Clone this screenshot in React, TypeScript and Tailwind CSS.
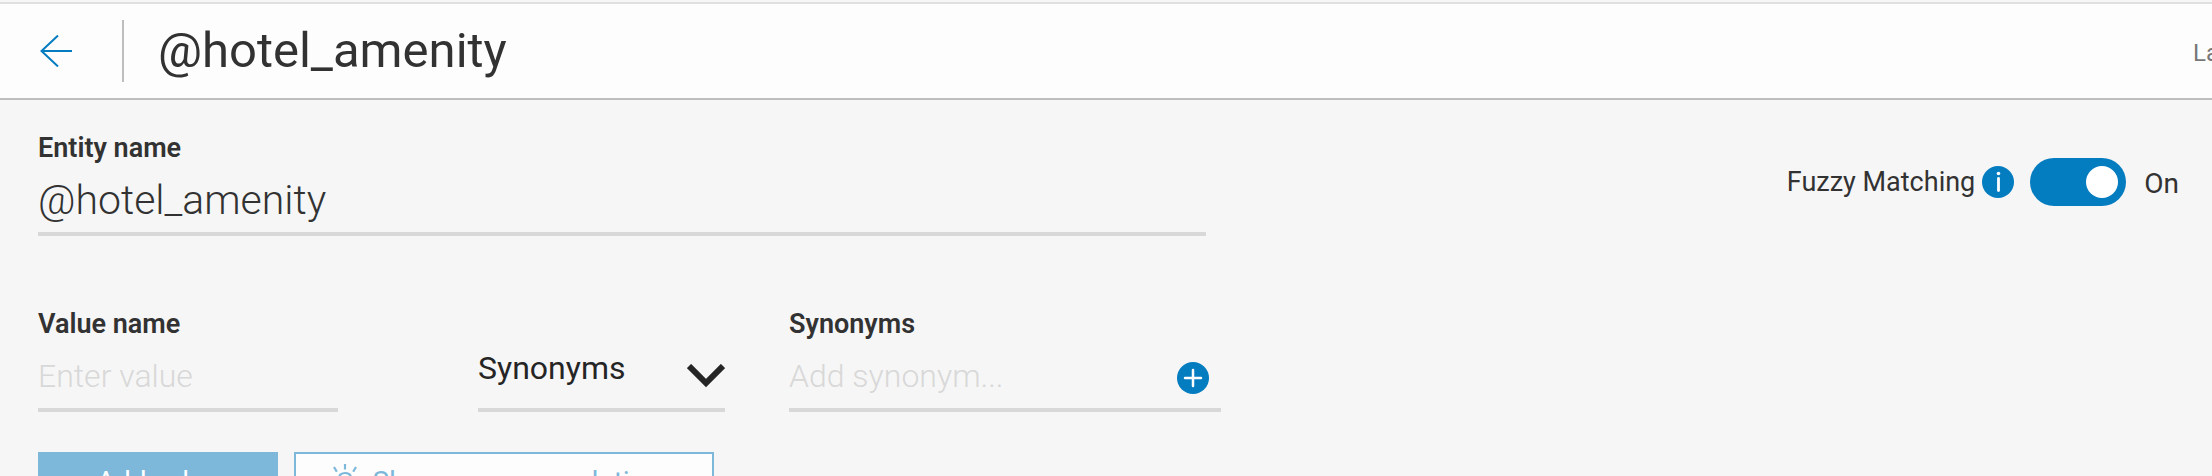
import React from "react";

const label = "block text-[27px] leading-[32px] font-semibold text-[#323232]";
const field = "block w-full min-w-0 bg-transparent outline-none font-light";
const placeholder = "text-[32px] pt-1 placeholder:text-[#d8d8d8] placeholder:opacity-100";

function InfoIcon() {
  return (
    <svg viewBox="0 0 32 32" className="size-8 shrink-0" role="img" aria-label="About fuzzy matching">
      <circle cx="16" cy="16" r="16" fill="#047cc0" />
      <circle cx="16.5" cy="7.5" r="1.8" fill="#fff" />
      <rect x="15.1" y="11" width="2.8" height="15" rx="1.4" fill="#fff" />
    </svg>
  );
}

function BulbIcon() {
  return (
    <svg viewBox="0 0 24 36" className="h-9 w-6" fill="none" stroke="currentColor" strokeWidth="2.2" aria-hidden="true">
      <path d="M12 0v5.500M1 3l2.800 4.800M23 3l-2.800 4.800" />
      <path d="M9 25c0-4-3-5-3-10.500C6 11 8.500 9 12 9s6 2 6 5.500C18 20 15 21 15 25zM9 29h6M10 33h4" />
    </svg>
  );
}

export default function App() {
  return (
    <div className="flex h-screen flex-col overflow-hidden bg-[#f6f6f6] font-[Roboto,sans-serif] text-[#323232]">
      <header className="mt-0.5 flex h-[98px] shrink-0 items-center border-t-2 border-b-2 border-t-[#e0e0e0] border-b-[#bebebe] bg-[#fdfdfd] pl-10">
        <button type="button" aria-label="Back" className="shrink-0">
          <svg viewBox="0 0 32 32" className="size-8" fill="none" stroke="#047cc0" strokeWidth="2">
            <path d="M32 16H1.500M18 0.500L1.500 16l16.500 15.500" />
          </svg>
        </button>
        <div className="ml-[50px] h-[62px] w-0.5 shrink-0 bg-[#bebebe]" />
        <h1 className="ml-[34px] text-[49px] leading-[60px]">@hotel_amenity</h1>
        <div className="ml-auto w-[19px] shrink-0 overflow-hidden pt-1 text-2xl whitespace-nowrap text-[#777777]">Last modified</div>
      </header>

      <main className="shrink-0 pl-[38px]">
        <div className="flex items-start justify-between pt-8 pr-[33px]">
          <div className="w-[1168px]">
            <label htmlFor="entity" className={label}>Entity name</label>
            <input id="entity" defaultValue="@hotel_amenity" className={field + " h-[72px] border-b-4 border-[#d8d8d8] pt-1 text-[41px]"} />
          </div>
          <div className="mt-[26px] flex items-center">
            <label htmlFor="fuzzy" className="mr-[7px] text-[27px] leading-8">Fuzzy Matching</label>
            <InfoIcon />
            <input id="fuzzy" type="checkbox" role="switch" defaultChecked className="ml-4 flex h-12 w-24 appearance-none items-center justify-end rounded-full bg-[#047cc0] px-2 before:size-8 before:rounded-full before:bg-white" />
            <span className="ml-[18px] pt-1 text-[28px] leading-8">On</span>
          </div>
        </div>

        <div className="mt-[72px] flex items-end">
          <div className="w-[300px]">
            <label htmlFor="value" className={label}>Value name</label>
            <input id="value" placeholder="Enter value" className={field + " " + placeholder + " h-[72px] border-b-4 border-[#d8d8d8]"} />
          </div>
          <div className="relative ml-[140px] w-[247px]">
            <select aria-label="Value type" className="block h-[72px] w-full appearance-none border-b-4 border-[#d8d8d8] bg-transparent pb-3 text-[32px] text-[#252525] outline-none">
              <option>Synonyms</option>
            </select>
            <svg viewBox="0 0 38 24" className="pointer-events-none absolute top-6 right-0 h-6 w-[38px]" fill="none" stroke="#252525" strokeWidth="6" aria-hidden="true">
              <path d="M2 2l17 17L36 2" />
            </svg>
          </div>
          <div className="ml-16 w-[432px]">
            <label htmlFor="synonym" className={label}>Synonyms</label>
            <div className="flex h-[72px] items-center border-b-4 border-[#d8d8d8] pr-3">
              <input id="synonym" placeholder="Add synonym..." className={field + " " + placeholder} />
              <button type="button" aria-label="Add synonym" className="shrink-0 pt-2">
                <svg viewBox="0 0 32 32" className="size-8">
                  <circle cx="16" cy="16" r="16" fill="#047cc0" />
                  <path d="M16 8v16M8 16h16" stroke="#fff" strokeWidth="2.500" strokeLinecap="round" />
                </svg>
              </button>
            </div>
          </div>
        </div>

        <div className="mt-10 flex gap-4">
          <button type="button" className="h-[60px] w-60 bg-[#7db8db] text-[28px] text-white">Add value</button>
          <button type="button" className="flex h-[60px] w-[420px] items-center justify-center gap-4 border-2 border-[#7db8db] bg-[#fdfdfd] text-[28px] text-[#7db8db]">
            <BulbIcon />
            Show recommendations
          </button>
        </div>
      </main>
    </div>
  );
}
